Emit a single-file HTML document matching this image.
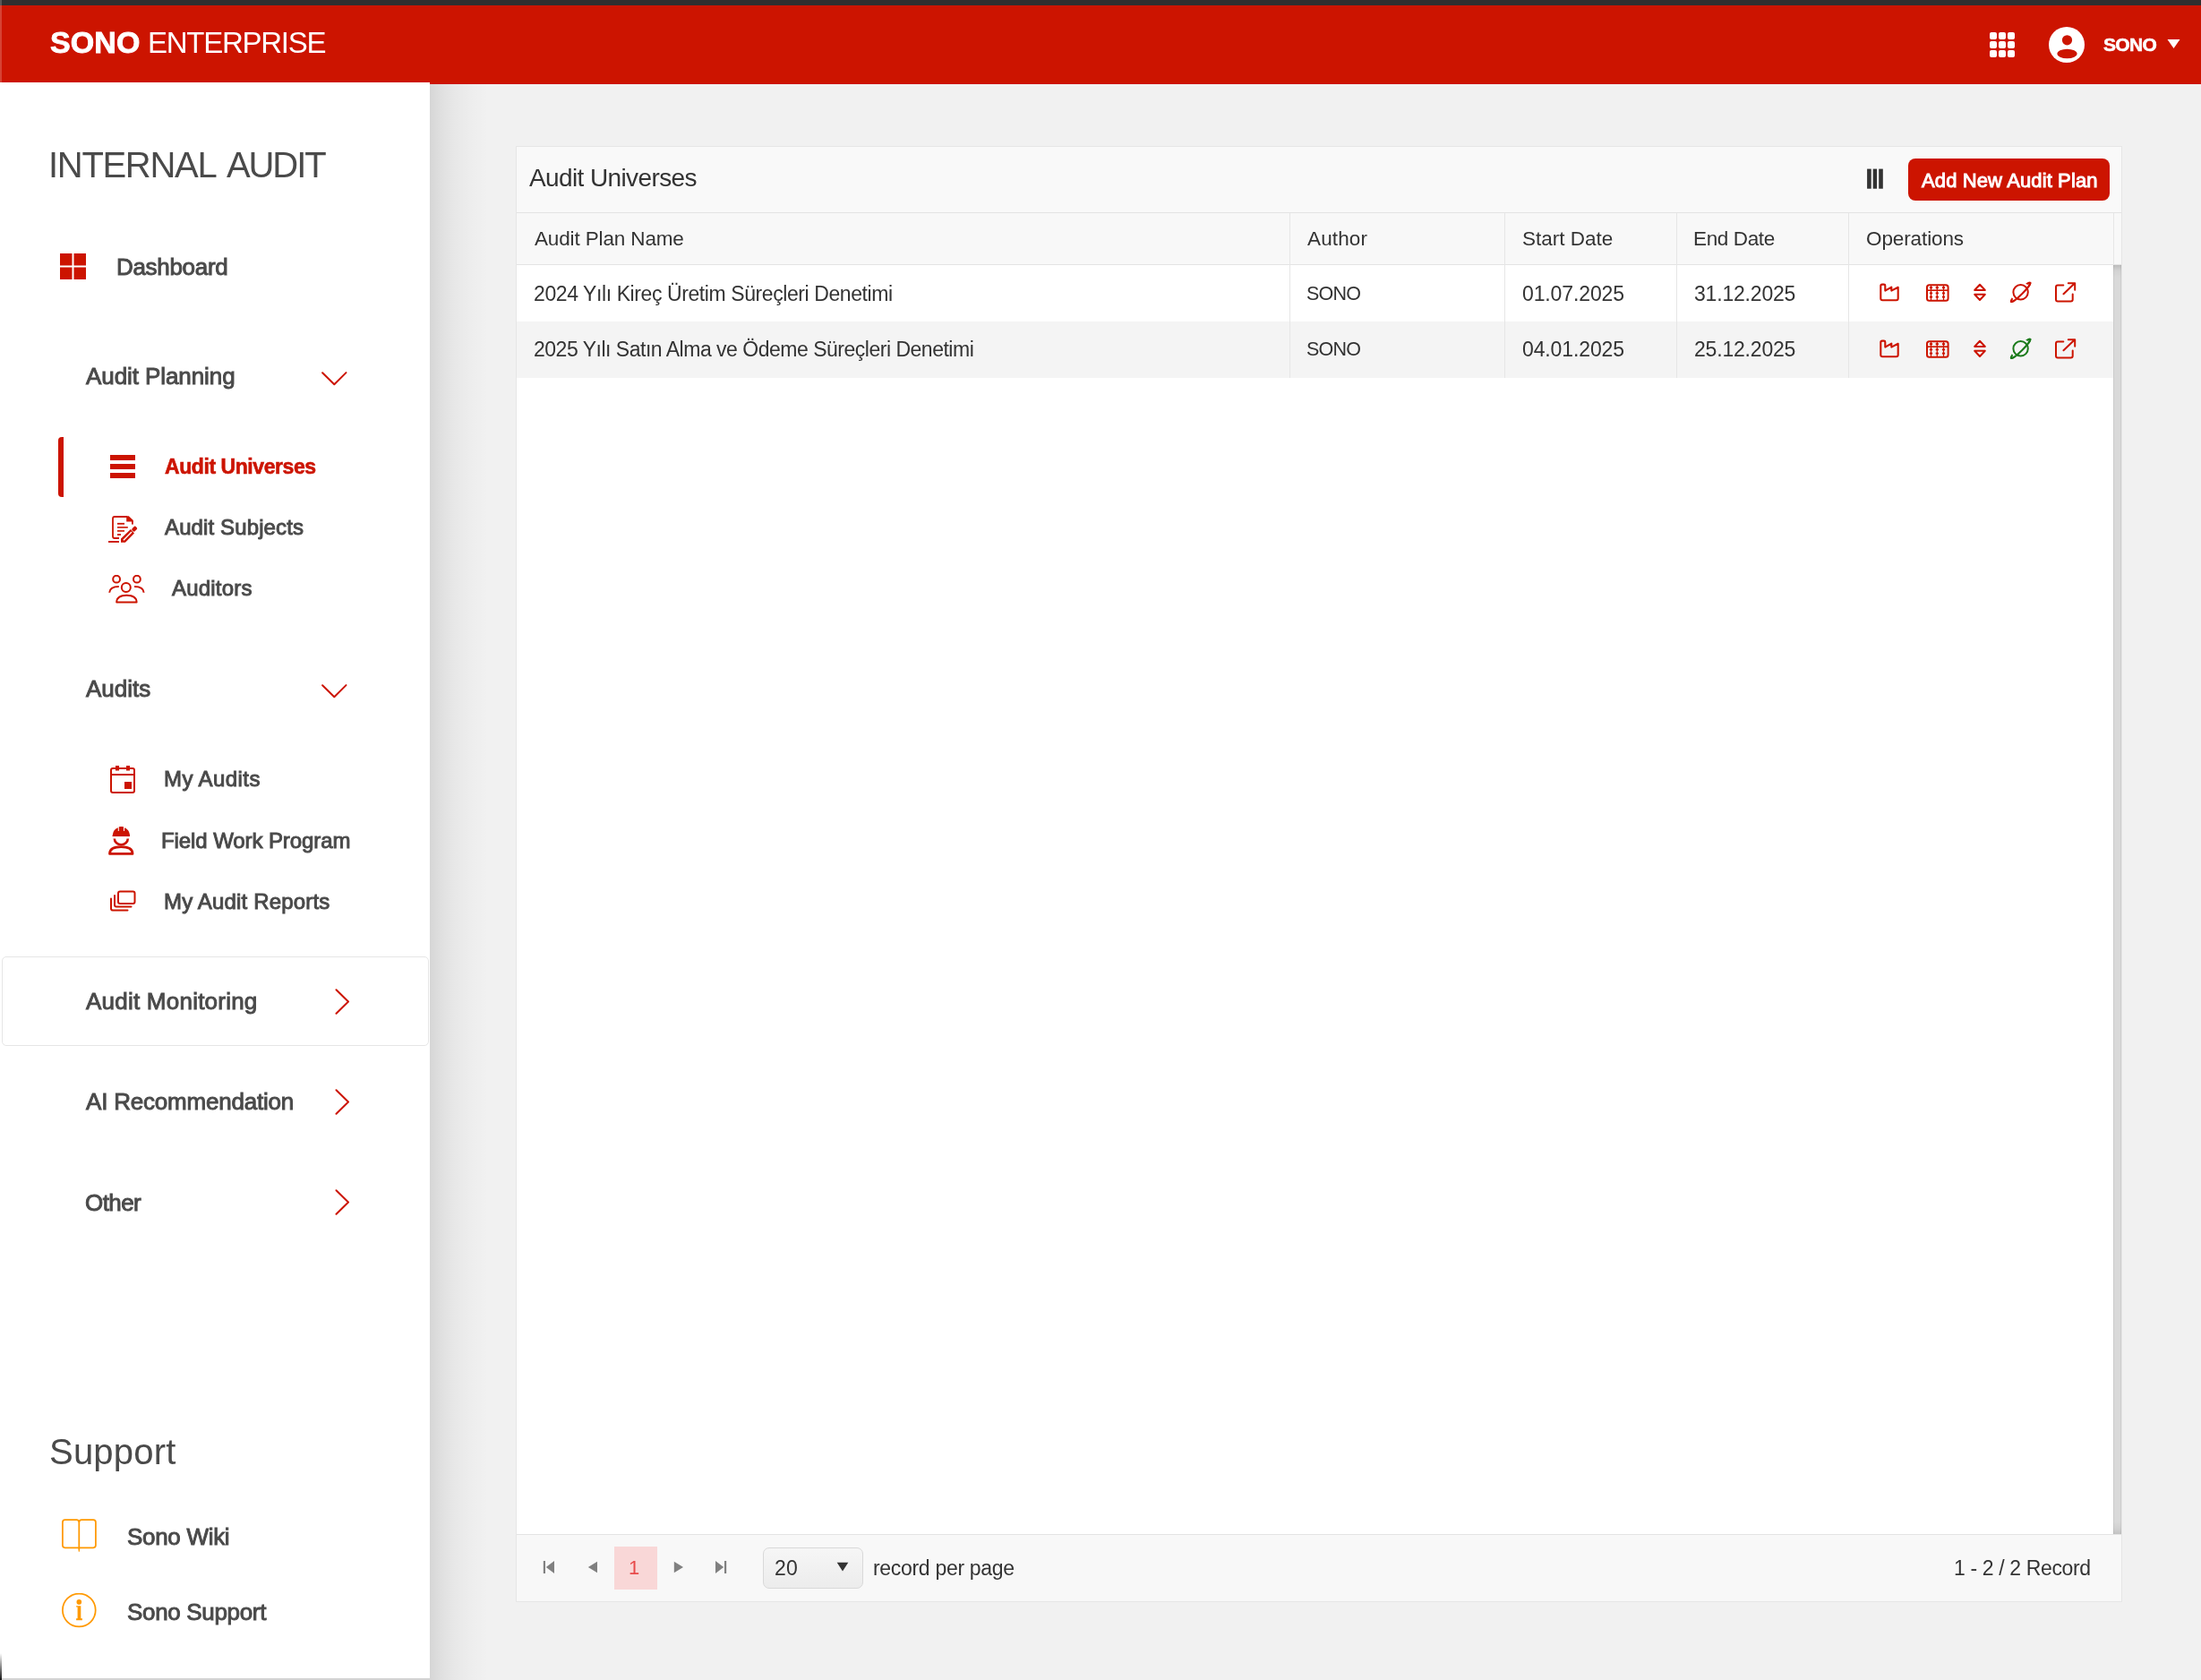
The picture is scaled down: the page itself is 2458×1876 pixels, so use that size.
<!DOCTYPE html>
<html><head><meta charset="utf-8"><title>Audit Universes</title>
<style>
html,body{margin:0;padding:0;width:2458px;height:1876px;overflow:hidden;background:#f0f0f0;}
body{position:relative;font-family:"Liberation Sans",sans-serif;}
.a{position:absolute;display:block;}
.t{position:absolute;white-space:pre;font-family:"Liberation Sans",sans-serif;will-change:transform;}
</style></head><body>
<div class="a" style="left:0px;top:0px;width:2458px;height:1876px;background:#f1f1f1;"></div>
<div class="a" style="left:576px;top:163px;width:1794px;height:1626px;background:#ffffff;box-sizing:border-box;border:1px solid #e6e6e6;"></div>
<div class="a" style="left:577px;top:164px;width:1792px;height:73px;background:#f9f9f9;"></div>
<div class="a" style="left:577px;top:237px;width:1792px;height:1px;background:#e4e4e4;"></div>
<div class="a" style="left:577px;top:238px;width:1792px;height:57px;background:#f8f8f8;"></div>
<div class="a" style="left:577px;top:295px;width:1792px;height:1px;background:#e4e4e4;"></div>
<div class="a" style="left:577px;top:359px;width:1783px;height:63px;background:#f4f4f4;"></div>
<div class="a" style="left:1440px;top:238px;width:1px;height:184px;background:#e6e6e6;"></div>
<div class="a" style="left:1680px;top:238px;width:1px;height:184px;background:#e6e6e6;"></div>
<div class="a" style="left:1872px;top:238px;width:1px;height:184px;background:#e6e6e6;"></div>
<div class="a" style="left:2064px;top:238px;width:1px;height:184px;background:#e6e6e6;"></div>
<div class="a" style="left:2360px;top:238px;width:1px;height:184px;background:#e6e6e6;"></div>
<div class="a" style="left:2360px;top:296px;width:9px;height:1417px;background:linear-gradient(#bcbcbc 0px,#d2d2d2 6px,#d9d9d9 14px,#d9d9d9 calc(100% - 14px),#d0d0d0 calc(100% - 6px),#c2c2c2 100%);box-shadow:inset 1px 0 0 rgba(0,0,0,0.06), inset -1px 0 0 rgba(0,0,0,0.05);"></div>
<div class="a" style="left:577px;top:1713px;width:1792px;height:1px;background:#e4e4e4;"></div>
<div class="a" style="left:577px;top:1714px;width:1792px;height:74px;background:#f8f8f8;"></div>
<div class="a" style="left:686px;top:1727px;width:48px;height:48px;background:#f9d7d7;"></div>
<div class="a" style="left:852px;top:1728px;width:112px;height:46px;background:linear-gradient(#f6f6f6,#ececec);box-sizing:border-box;border:1px solid #d9d9d9;border-radius:7px;"></div>
<svg class="a" style="left:606px;top:1743px" width="14" height="14" viewBox="0 0 14 14"><rect x="0.8" y="0" width="2.2" height="14" fill="#808080"/><path d="M13 0 L13 14 L3.8 7 Z" fill="#808080"/></svg>
<svg class="a" style="left:656px;top:1743px" width="12" height="14" viewBox="0 0 12 14"><path d="M11 0.7 L11 13.3 L0.8 7 Z" fill="#808080"/></svg>
<svg class="a" style="left:752px;top:1743px" width="12" height="14" viewBox="0 0 12 14"><path d="M0.8 0.7 L0.8 13.3 L11 7 Z" fill="#808080"/></svg>
<svg class="a" style="left:798px;top:1743px" width="14" height="14" viewBox="0 0 14 14"><rect x="11" y="0" width="2.2" height="14" fill="#808080"/><path d="M1 0 L1 14 L10.2 7 Z" fill="#808080"/></svg>
<svg class="a" style="left:934px;top:1744px" width="14" height="11" viewBox="0 0 14 11"><path d="M0.7 0.8 L13.3 0.8 L7 10.5 Z" fill="#333"/></svg>
<svg class="a" style="left:2085px;top:188px" width="18" height="24" viewBox="0 0 18 24"><rect x="0.1" y="0.6" width="4.6" height="22.1" fill="#333"/><rect x="6.7" y="0.6" width="4.4" height="22.1" fill="#333"/><rect x="13.2" y="0.6" width="4.6" height="22.1" fill="#333"/></svg>
<div class="a" style="left:2131px;top:177px;width:225px;height:47px;background:#cc1400;border-radius:8px;"></div>
<div class="a" style="left:0px;top:0px;width:2458px;height:6px;background:#2f2f2f;"></div>
<div class="a" style="left:0px;top:6px;width:2458px;height:88px;background:#cc1400;"></div>
<div class="a" style="left:480px;top:94px;width:66px;height:1782px;background:linear-gradient(to right, rgba(0,0,0,0.115), rgba(0,0,0,0.075) 18%, rgba(0,0,0,0.04) 42%, rgba(0,0,0,0.015) 70%, rgba(0,0,0,0));"></div>
<div class="a" style="left:0px;top:92px;width:480px;height:1784px;background:#ffffff;"></div>
<div class="a" style="left:0px;top:1874px;width:480px;height:2px;background:#d3d3d3;"></div>
<div class="a" style="left:2px;top:1068px;width:477px;height:100px;background:transparent;box-sizing:border-box;border:1px solid #e6e6e6;border-radius:5px;"></div>
<div class="a" style="left:65px;top:488px;width:6px;height:67px;background:#cc1400;border-radius:4px 0 0 4px;"></div>
<div class="a" style="left:0px;top:0px;width:2px;height:94px;background:rgba(255,255,255,0.2);"></div>
<div class="a" style="left:0px;top:1846px;width:2px;height:30px;background:linear-gradient(rgba(0,0,0,0),rgba(0,0,0,0.9));"></div>
<svg class="a" style="left:2222px;top:36px" width="28" height="28" viewBox="0 0 28 28"><rect x="0" y="0" width="8" height="8" rx="2" fill="#fff"/><rect x="0" y="10" width="8" height="8" rx="2" fill="#fff"/><rect x="0" y="20" width="8" height="8" rx="2" fill="#fff"/><rect x="10" y="0" width="8" height="8" rx="2" fill="#fff"/><rect x="10" y="10" width="8" height="8" rx="2" fill="#fff"/><rect x="10" y="20" width="8" height="8" rx="2" fill="#fff"/><rect x="20" y="0" width="8" height="8" rx="2" fill="#fff"/><rect x="20" y="10" width="8" height="8" rx="2" fill="#fff"/><rect x="20" y="20" width="8" height="8" rx="2" fill="#fff"/></svg>
<svg class="a" style="left:2288px;top:30px" width="40" height="40" viewBox="0 0 40 40"><circle cx="20" cy="20" r="20" fill="#fff"/><circle cx="20.5" cy="14.8" r="5.6" fill="#cc1400"/><ellipse cx="20.5" cy="30" rx="11.2" ry="5.2" fill="#cc1400"/></svg>
<svg class="a" style="left:2420px;top:44px" width="15" height="10" viewBox="0 0 15 10"><path d="M0.5 0 H14.5 L7.5 10 Z" fill="#fff"/></svg>
<svg class="a" style="left:67px;top:283px" width="29" height="29" viewBox="0 0 29 29"><rect x="0" y="0" width="13.5" height="13.5" fill="#cc1400"/><rect x="0" y="15.5" width="13.5" height="13.5" fill="#cc1400"/><rect x="15.5" y="0" width="13.5" height="13.5" fill="#cc1400"/><rect x="15.5" y="15.5" width="13.5" height="13.5" fill="#cc1400"/></svg>
<svg class="a" style="left:359px;top:415px" width="29" height="16" viewBox="0 0 29 16"><path d="M1.1 1.3 L14.3 14.3 L27.5 1.1" fill="none" stroke="#cc1400" stroke-width="2" stroke-linecap="round" stroke-linejoin="round"/></svg>
<svg class="a" style="left:359px;top:764px" width="29" height="16" viewBox="0 0 29 16"><path d="M1.1 1.3 L14.3 14.3 L27.5 1.1" fill="none" stroke="#cc1400" stroke-width="2" stroke-linecap="round" stroke-linejoin="round"/></svg>
<svg class="a" style="left:374px;top:1104px" width="17" height="30" viewBox="0 0 17 30"><path d="M1.5 1.2 L15 14.5 L1.5 27.8" fill="none" stroke="#cc1400" stroke-width="2" stroke-linecap="round" stroke-linejoin="round"/></svg>
<svg class="a" style="left:374px;top:1216px" width="17" height="30" viewBox="0 0 17 30"><path d="M1.5 1.2 L15 14.5 L1.5 27.8" fill="none" stroke="#cc1400" stroke-width="2" stroke-linecap="round" stroke-linejoin="round"/></svg>
<svg class="a" style="left:374px;top:1328px" width="17" height="30" viewBox="0 0 17 30"><path d="M1.5 1.2 L15 14.5 L1.5 27.8" fill="none" stroke="#cc1400" stroke-width="2" stroke-linecap="round" stroke-linejoin="round"/></svg>
<svg class="a" style="left:123px;top:508px" width="28" height="26" viewBox="0 0 28 26"><rect x="0" y="0" width="28" height="6" fill="#cc1400"/><rect x="0" y="10" width="28" height="6" fill="#cc1400"/><rect x="0" y="20" width="28" height="6" fill="#cc1400"/></svg>
<svg class="a" style="left:121px;top:576px" width="34" height="31" viewBox="0 0 34 31"><path d="M12 25 H7 Q5 25 5 23 V3 Q5 1 7 1 H21" fill="none" stroke="#cc1400" stroke-width="1.8" stroke-linejoin="round"/>
<path d="M20.2 0.2 L20.2 6.4 L27.8 6.4 L27.8 5 L22.8 0.2 Z" fill="#cc1400"/><rect x="26" y="6" width="1.8" height="3.6" fill="#cc1400"/>
<rect x="10" y="7.9" width="8" height="1.8" fill="#cc1400"/><rect x="10" y="12.1" width="11.8" height="1.6" fill="#cc1400"/>
<rect x="10" y="16.1" width="8" height="1.6" fill="#cc1400"/><rect x="10" y="20.1" width="4" height="1.8" fill="#cc1400"/>
<path d="M14 25.4 L14 29.7 L18.9 29.7 L29 19.4 L24.9 15 Z" fill="#cc1400"/><path d="M16.9 27.3 L26 18.1" stroke="#fff" stroke-width="1.4"/>
<rect x="26.3" y="12.4" width="5.8" height="4.4" rx="1.6" transform="rotate(-45 29.2 14.6)" fill="#cc1400"/>
<rect x="0" y="28" width="12" height="1.9" fill="#cc1400"/></svg>
<svg class="a" style="left:121px;top:642px" width="41" height="33" viewBox="0 0 41 33"><g fill="none" stroke="#cc1400" stroke-width="2">
<circle cx="9.1" cy="4.7" r="3.9"/><circle cx="31.9" cy="4.7" r="3.9"/><circle cx="19.8" cy="13.9" r="5"/>
<path d="M9.2 30.5 Q9.5 22.8 20.4 22.8 Q31.3 22.8 31.6 30.5 Z" stroke-linejoin="round"/>
<path d="M1.2 19.8 Q1.6 13 11.8 13"/><path d="M39.6 19.8 Q39.2 13 29 13"/></g></svg>
<svg class="a" style="left:123px;top:855px" width="28" height="31" viewBox="0 0 28 31"><rect x="1" y="3" width="26" height="27" rx="2" fill="none" stroke="#cc1400" stroke-width="2"/>
<rect x="1" y="9" width="26" height="2" fill="#cc1400"/><rect x="6" y="0" width="4" height="5.5" fill="#cc1400"/><rect x="18" y="0" width="4" height="5.5" fill="#cc1400"/>
<rect x="16" y="18" width="8" height="8" fill="#cc1400"/></svg>
<svg class="a" style="left:121px;top:922px" width="29" height="34" viewBox="0 0 29 34"><path d="M4.4 12 H24 V10.2 Q23.2 4 18 2.2 V6 H17 V1.3 Q14.2 0.6 11.8 1.3 V6 H10.8 V2.2 Q5.4 4 4.8 10.2 Z" fill="#cc1400"/>
<path d="M6.8 14.6 A7.5 6.6 0 0 0 21.8 14.6" fill="none" stroke="#cc1400" stroke-width="2.6"/>
<path d="M1.5 31.4 Q1.5 23.6 14.3 23.6 Q27 23.6 27 31.4 Z" fill="none" stroke="#cc1400" stroke-width="2.8" stroke-linejoin="round"/></svg>
<svg class="a" style="left:123px;top:994px" width="29" height="24" viewBox="0 0 29 24"><g fill="none" stroke="#cc1400" stroke-width="2" stroke-linejoin="round" stroke-linecap="round">
<rect x="9" y="1.5" width="18.5" height="13.5" rx="2"/>
<path d="M5 6 V16.5 Q5 18.5 7 18.5 H23.5"/><path d="M1 9.5 V20.5 Q1 22.5 3 22.5 H19.5"/></g></svg>
<svg class="a" style="left:69px;top:1696px" width="39" height="38" viewBox="0 0 39 38"><g fill="none" stroke="#ff9900" stroke-width="1.75" stroke-linejoin="round">
<path d="M19.3 3.6 Q18.8 1.2 16.6 1.2 H3.6 Q0.9 1.2 0.9 3.9 V29.6 Q0.9 32.3 3.6 32.3 H19.3 V3.6 Z"/>
<path d="M19.3 3.6 Q19.8 1.2 22 1.2 H35.2 Q37.9 1.2 37.9 3.9 V29.6 Q37.9 32.3 35.2 32.3 H19.3"/></g>
<path d="M18.2 32 H20.4 L19.8 36.8 H18.8 Z" fill="#ff9900"/></svg>
<svg class="a" style="left:69px;top:1779px" width="39" height="39" viewBox="0 0 39 39"><circle cx="19.3" cy="19" r="18.4" fill="none" stroke="#ff9900" stroke-width="1.75"/>
<circle cx="19.3" cy="9.9" r="2.8" fill="#ff9900"/><path d="M16.1 14.3 H21.3 V28.2 H22.9 V30.2 H16.1 V28.2 H17.6 V15.6 H16.1 Z" fill="#ff9900"/></svg>
<svg class="a" style="left:2099px;top:316px" width="23" height="21" viewBox="0 0 23 21"><path d="M3.3 19.2 Q1.3 19.2 1.3 17.2 V3.2 Q1.3 1.6 2.9 1.6 H4.9 Q6.3 1.6 6.3 3 V8.6 L13.3 4.6 V8.6 L20.7 4.8 V17.2 Q20.7 19.2 18.7 19.2 Z" fill="none" stroke="#cc1400" stroke-width="2.1" stroke-linejoin="round"/></svg>
<svg class="a" style="left:2151px;top:317px" width="26" height="20" viewBox="0 0 26 20"><rect x="1" y="1.2" width="23.6" height="17.6" rx="2.6" fill="none" stroke="#cc1400" stroke-width="2"/><rect x="1" y="6.4" width="23.6" height="1.6" fill="#cc1400"/><rect x="4.9" y="2" width="1.2" height="16" fill="#cc1400"/><rect x="3.9" y="3.2" width="3.2" height="2" fill="#cc1400"/><rect x="3.9" y="9.4" width="3.2" height="2" fill="#cc1400"/><rect x="3.9" y="13.6" width="3.2" height="2" fill="#cc1400"/><rect x="11.700000000000001" y="2" width="1.2" height="16" fill="#cc1400"/><rect x="10.700000000000001" y="3.2" width="3.2" height="2" fill="#cc1400"/><rect x="10.700000000000001" y="9.4" width="3.2" height="2" fill="#cc1400"/><rect x="10.700000000000001" y="13.6" width="3.2" height="2" fill="#cc1400"/><rect x="18.9" y="2" width="1.2" height="16" fill="#cc1400"/><rect x="17.9" y="3.2" width="3.2" height="2" fill="#cc1400"/><rect x="17.9" y="9.4" width="3.2" height="2" fill="#cc1400"/><rect x="17.9" y="13.6" width="3.2" height="2" fill="#cc1400"/></svg>
<svg class="a" style="left:2203px;top:316px" width="16" height="21" viewBox="0 0 16 21"><g fill="none" stroke="#cc1400" stroke-width="2" stroke-linejoin="round"><path d="M2.2 8 L8 1.8 L13.8 8 Z"/><path d="M2.2 12.8 L8 19 L13.8 12.8 Z"/></g></svg>
<svg class="a" style="left:2242px;top:313px" width="29" height="29" viewBox="0 0 29 29"><g fill="none" stroke="#cc1400" stroke-width="2"><ellipse cx="14.6" cy="13.3" rx="15.1" ry="2.4" transform="rotate(-45 14.6 13.3)"/><circle cx="14.6" cy="13.3" r="8.4" fill="#ffffff" stroke="#ffffff" stroke-width="6"/><circle cx="14.6" cy="13.3" r="8.2"/><path d="M29.7 13.3 A15.1 2.4 0 0 1 -0.5 13.3" transform="rotate(-45 14.6 13.3)"/></g></svg>
<svg class="a" style="left:2295px;top:315px" width="24" height="24" viewBox="0 0 24 24"><g fill="none" stroke="#cc1400" stroke-width="2" stroke-linejoin="round" stroke-linecap="round"><path d="M9.3 3.5 H3 Q1 3.5 1 5.5 V19.5 Q1 21.5 3 21.5 H17.5 Q19.7 21.5 19.7 19.5 V13.5"/><path d="M9.5 13.2 L22 1.2 M14.8 1.2 H22.2 V8.8"/></g></svg>
<svg class="a" style="left:2099px;top:379px" width="23" height="21" viewBox="0 0 23 21"><path d="M3.3 19.2 Q1.3 19.2 1.3 17.2 V3.2 Q1.3 1.6 2.9 1.6 H4.9 Q6.3 1.6 6.3 3 V8.6 L13.3 4.6 V8.6 L20.7 4.8 V17.2 Q20.7 19.2 18.7 19.2 Z" fill="none" stroke="#cc1400" stroke-width="2.1" stroke-linejoin="round"/></svg>
<svg class="a" style="left:2151px;top:380px" width="26" height="20" viewBox="0 0 26 20"><rect x="1" y="1.2" width="23.6" height="17.6" rx="2.6" fill="none" stroke="#cc1400" stroke-width="2"/><rect x="1" y="6.4" width="23.6" height="1.6" fill="#cc1400"/><rect x="4.9" y="2" width="1.2" height="16" fill="#cc1400"/><rect x="3.9" y="3.2" width="3.2" height="2" fill="#cc1400"/><rect x="3.9" y="9.4" width="3.2" height="2" fill="#cc1400"/><rect x="3.9" y="13.6" width="3.2" height="2" fill="#cc1400"/><rect x="11.700000000000001" y="2" width="1.2" height="16" fill="#cc1400"/><rect x="10.700000000000001" y="3.2" width="3.2" height="2" fill="#cc1400"/><rect x="10.700000000000001" y="9.4" width="3.2" height="2" fill="#cc1400"/><rect x="10.700000000000001" y="13.6" width="3.2" height="2" fill="#cc1400"/><rect x="18.9" y="2" width="1.2" height="16" fill="#cc1400"/><rect x="17.9" y="3.2" width="3.2" height="2" fill="#cc1400"/><rect x="17.9" y="9.4" width="3.2" height="2" fill="#cc1400"/><rect x="17.9" y="13.6" width="3.2" height="2" fill="#cc1400"/></svg>
<svg class="a" style="left:2203px;top:379px" width="16" height="21" viewBox="0 0 16 21"><g fill="none" stroke="#cc1400" stroke-width="2" stroke-linejoin="round"><path d="M2.2 8 L8 1.8 L13.8 8 Z"/><path d="M2.2 12.8 L8 19 L13.8 12.8 Z"/></g></svg>
<svg class="a" style="left:2242px;top:376px" width="29" height="29" viewBox="0 0 29 29"><g fill="none" stroke="#1a7a1a" stroke-width="2"><ellipse cx="14.6" cy="13.3" rx="15.1" ry="2.4" transform="rotate(-45 14.6 13.3)"/><circle cx="14.6" cy="13.3" r="8.4" fill="#f4f4f4" stroke="#f4f4f4" stroke-width="6"/><circle cx="14.6" cy="13.3" r="8.2"/><path d="M29.7 13.3 A15.1 2.4 0 0 1 -0.5 13.3" transform="rotate(-45 14.6 13.3)"/></g></svg>
<svg class="a" style="left:2295px;top:378px" width="24" height="24" viewBox="0 0 24 24"><g fill="none" stroke="#cc1400" stroke-width="2" stroke-linejoin="round" stroke-linecap="round"><path d="M9.3 3.5 H3 Q1 3.5 1 5.5 V19.5 Q1 21.5 3 21.5 H17.5 Q19.7 21.5 19.7 19.5 V13.5"/><path d="M9.5 13.2 L22 1.2 M14.8 1.2 H22.2 V8.8"/></g></svg>
<span class="t" style="left:55.7px;top:30.2px;font-size:34px;line-height:34px;color:#ffffff;letter-spacing:0.1px;font-weight:bold;-webkit-text-stroke:0.88px #ffffff;">SONO</span>
<span class="t" style="left:164.7px;top:31.3px;font-size:33px;line-height:33px;color:#ffffff;letter-spacing:-1.27px;">ENTERPRISE</span>
<span class="t" style="left:2349.0px;top:39.4px;font-size:21px;line-height:21px;color:#ffffff;letter-spacing:-0.67px;font-weight:bold;-webkit-text-stroke:0.55px #ffffff;">SONO</span>
<span class="t" style="left:54.0px;top:163.9px;font-size:40px;line-height:40px;color:#4a4a4a;letter-spacing:-1.31px;">INTERNAL</span>
<span class="t" style="left:252.9px;top:163.9px;font-size:40px;line-height:40px;color:#4a4a4a;letter-spacing:-2.1px;">AUDIT</span>
<span class="t" style="left:130.0px;top:285.0px;font-size:26px;line-height:26px;color:#4a4a4a;letter-spacing:-0.31px;-webkit-text-stroke:0.95px #4a4a4a;">Dashboard</span>
<span class="t" style="left:96.0px;top:407.0px;font-size:26px;line-height:26px;color:#4a4a4a;letter-spacing:-0.08px;-webkit-text-stroke:0.95px #4a4a4a;">Audit Planning</span>
<span class="t" style="left:184.0px;top:509.9px;font-size:23px;line-height:23px;color:#cc1400;letter-spacing:-0.43px;font-weight:bold;-webkit-text-stroke:0.60px #cc1400;">Audit Universes</span>
<span class="t" style="left:184.0px;top:577.4px;font-size:24px;line-height:24px;color:#4a4a4a;letter-spacing:0.12px;-webkit-text-stroke:0.95px #4a4a4a;">Audit Subjects</span>
<span class="t" style="left:192.0px;top:645.4px;font-size:24px;line-height:24px;color:#4a4a4a;letter-spacing:0.2px;-webkit-text-stroke:0.95px #4a4a4a;">Auditors</span>
<span class="t" style="left:96.0px;top:756.0px;font-size:26px;line-height:26px;color:#4a4a4a;-webkit-text-stroke:0.95px #4a4a4a;">Audits</span>
<span class="t" style="left:183.0px;top:857.7px;font-size:24px;line-height:24px;color:#4a4a4a;letter-spacing:0.42px;-webkit-text-stroke:0.95px #4a4a4a;">My Audits</span>
<span class="t" style="left:179.5px;top:926.7px;font-size:24px;line-height:24px;color:#4a4a4a;letter-spacing:-0.09px;-webkit-text-stroke:0.95px #4a4a4a;">Field Work Program</span>
<span class="t" style="left:183.0px;top:994.7px;font-size:24px;line-height:24px;color:#4a4a4a;letter-spacing:0.17px;-webkit-text-stroke:0.95px #4a4a4a;">My Audit Reports</span>
<span class="t" style="left:96.0px;top:1105.4px;font-size:26px;line-height:26px;color:#4a4a4a;letter-spacing:0.23px;-webkit-text-stroke:0.95px #4a4a4a;">Audit Monitoring</span>
<span class="t" style="left:96.0px;top:1217.3px;font-size:26px;line-height:26px;color:#4a4a4a;letter-spacing:-0.21px;-webkit-text-stroke:0.95px #4a4a4a;">AI Recommendation</span>
<span class="t" style="left:95.0px;top:1329.6px;font-size:26px;line-height:26px;color:#4a4a4a;letter-spacing:-0.58px;-webkit-text-stroke:0.95px #4a4a4a;">Other</span>
<span class="t" style="left:55.0px;top:1601.3px;font-size:40px;line-height:40px;color:#4a4a4a;letter-spacing:0.22px;">Support</span>
<span class="t" style="left:142.0px;top:1702.7px;font-size:26px;line-height:26px;color:#4a4a4a;letter-spacing:-0.3px;-webkit-text-stroke:0.95px #4a4a4a;">Sono Wiki</span>
<span class="t" style="left:142.0px;top:1786.6px;font-size:26px;line-height:26px;color:#4a4a4a;letter-spacing:-0.33px;-webkit-text-stroke:0.95px #4a4a4a;">Sono Support</span>
<span class="t" style="left:590.5px;top:184.9px;font-size:28px;line-height:28px;color:#333333;letter-spacing:-0.61px;">Audit Universes</span>
<span class="t" style="left:597.0px;top:255.6px;font-size:22.5px;line-height:22.5px;color:#333333;letter-spacing:-0.14px;">Audit Plan Name</span>
<span class="t" style="left:1460.4px;top:255.6px;font-size:22.5px;line-height:22.5px;color:#333333;letter-spacing:0.12px;">Author</span>
<span class="t" style="left:1699.6px;top:255.6px;font-size:22.5px;line-height:22.5px;color:#333333;">Start Date</span>
<span class="t" style="left:1891.0px;top:255.6px;font-size:22.5px;line-height:22.5px;color:#333333;letter-spacing:-0.37px;">End Date</span>
<span class="t" style="left:2084.0px;top:255.6px;font-size:22.5px;line-height:22.5px;color:#333333;letter-spacing:-0.11px;">Operations</span>
<span class="t" style="left:596.0px;top:316.7px;font-size:23px;line-height:23px;color:#333333;letter-spacing:-0.41px;">2024 Yılı Kireç Üretim Süreçleri Denetimi</span>
<span class="t" style="left:1459.4px;top:318.0px;font-size:21.5px;line-height:21.5px;color:#333333;letter-spacing:-0.8px;">SONO</span>
<span class="t" style="left:1699.6px;top:316.7px;font-size:23px;line-height:23px;color:#333333;letter-spacing:-0.12px;">01.07.2025</span>
<span class="t" style="left:1892.0px;top:316.7px;font-size:23px;line-height:23px;color:#333333;letter-spacing:-0.19px;">31.12.2025</span>
<span class="t" style="left:596.0px;top:379.1px;font-size:23px;line-height:23px;color:#333333;letter-spacing:-0.49px;">2025 Yılı Satın Alma ve Ödeme Süreçleri Denetimi</span>
<span class="t" style="left:1459.4px;top:380.4px;font-size:21.5px;line-height:21.5px;color:#333333;letter-spacing:-0.8px;">SONO</span>
<span class="t" style="left:1699.6px;top:379.1px;font-size:23px;line-height:23px;color:#333333;letter-spacing:-0.12px;">04.01.2025</span>
<span class="t" style="left:1892.0px;top:379.1px;font-size:23px;line-height:23px;color:#333333;letter-spacing:-0.19px;">25.12.2025</span>
<span class="t" style="left:2145.6px;top:190.6px;font-size:22px;line-height:22px;color:#ffffff;letter-spacing:0.12px;-webkit-text-stroke:0.95px #ffffff;">Add New Audit Plan</span>
<span class="t" style="left:702.4px;top:1740.2px;font-size:22px;line-height:22px;color:#e84a4a;">1</span>
<span class="t" style="left:865.2px;top:1739.9px;font-size:23px;line-height:23px;color:#333333;letter-spacing:0.2px;">20</span>
<span class="t" style="left:975.0px;top:1740.0px;font-size:23px;line-height:23px;color:#333333;letter-spacing:-0.31px;">record per page</span>
<span class="t" style="left:2181.8px;top:1739.6px;font-size:23px;line-height:23px;color:#333333;letter-spacing:-0.36px;">1 - 2 / 2 Record</span>
</body></html>
